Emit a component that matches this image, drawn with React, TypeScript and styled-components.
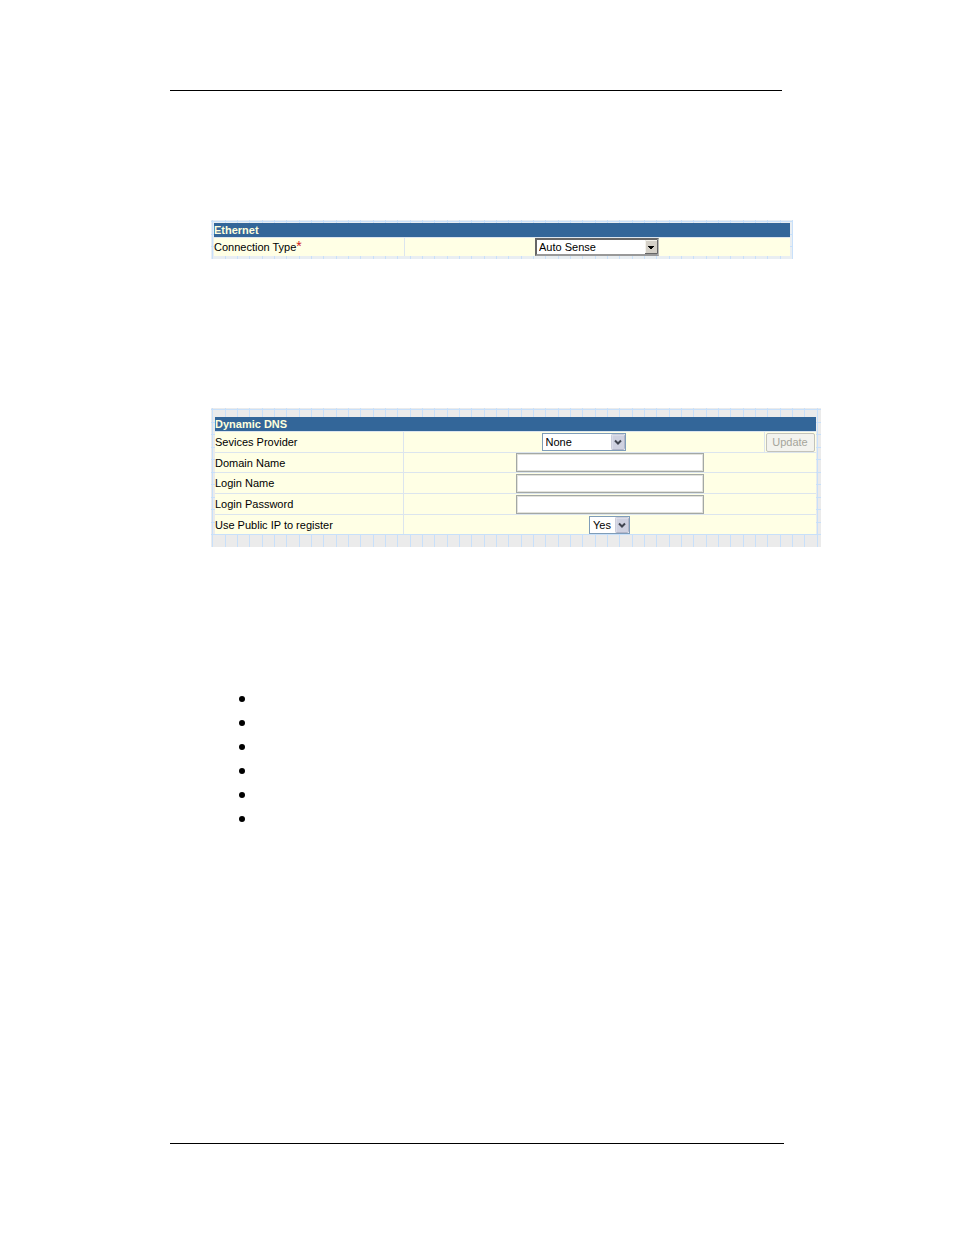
import React from "react";
import styled, { createGlobalStyle, css } from "styled-components";

const GlobalStyle = createGlobalStyle`
  *, *::before { box-sizing: border-box; }
  body {
    margin: 0;
    background: #fff;
    color: #000;
    font: 11px/14px "Liberation Sans", Arial, sans-serif;
  }
`;

const Page = styled.main`
  display: flex;
  flex-direction: column;
  padding: 90px 133px 91px 170px;
`;

const Rule = styled.hr<{ $end: number }>`
  width: auto;
  height: 1px;
  margin: 0 ${(p) => p.$end}px 0 0;
  border: 0;
  background: #000;
`;

const graph = css`
  background-color: #ebebeb;
  background-image:
    linear-gradient(#c8e0fa 1px, transparent 1px, transparent 13px, #c8e0fa 13px, #c8e0fa 14px, transparent 14px),
    linear-gradient(90deg, #c8e0fa 1px, transparent 1px, transparent 13px, #c8e0fa 13px, #c8e0fa 14px, transparent 14px, transparent 25px, #c8e0fa 25px, #c8e0fa 26px, transparent 26px);
  background-size: 100% 25px, 37px 100%;
  background-position: 0 1px, 1px 0;
`;

const EthernetPanel = styled.form`
  ${graph}
  background-color: #e9eef2;
  margin: 129px 28px 0 41px;
  padding: 3px 3px 3px 3px;
`;

const DnsPanel = styled.form`
  ${graph}
  margin: 149px 0 0 41px;
  padding: 9px 5px 13px 4px;
`;

const Grid = styled.table`
  width: 100%;
  table-layout: fixed;
  border-collapse: separate;
  border-spacing: 0;
`;

const Title = styled.th`
  height: 14px;
  padding: 0;
  background: #336699;
  color: #ffffdd;
  font-size: 11px;
  line-height: 14px;
  text-align: left;
`;

const Row = styled.tr<{ $height: number }>`
  height: ${(p) => p.$height}px;
`;

const Cell = styled.td<{ $divided?: boolean }>`
  padding: 0 1px 0 0;
  border-top: 1px solid #dce5ee;
  border-left: ${(p) => (p.$divided ? "1px solid #dce5ee" : "0")};
  background: #ffffe5;
  text-align: center;
  vertical-align: middle;
  white-space: nowrap;
`;

const LabelCell = styled(Cell)`
  text-align: left;
`;

const Label = styled.label`
  display: block;
`;

const Required = styled.span`
  color: #d02020;
  font-size: 14px;
  line-height: 12px;
  vertical-align: top;
`;

const Picker = styled.span<{ $width: number }>`
  position: relative;
  display: block;
  width: ${(p) => p.$width}px;
  height: 18px;
  margin: 0 auto;
`;

const Select = styled.select<{ $classic?: boolean }>`
  appearance: none;
  display: block;
  width: 100%;
  height: 18px;
  padding: 0 0 0 3px;
  border: 1px solid #7f9db9;
  border-radius: 0;
  background: #fff;
  color: #000;
  font: 11px/16px "Liberation Sans", Arial, sans-serif;
  ${(p) =>
    p.$classic &&
    css`
      padding-left: 2px;
      border: 2px solid;
      border-color: #666 #bbb #999 #666;
      line-height: 14px;
    `}
`;

const Arrow = styled.svg`
  position: absolute;
  top: 1px;
  right: 1px;
  pointer-events: none;
`;

const Field = styled.input`
  display: block;
  width: 188px;
  height: 19px;
  margin: 0 auto;
  padding: 0 3px;
  border: 1px solid #a3a8a6;
  border-radius: 0;
  background: #fff;
  box-shadow: inset 0 0 0 1px #e3e3dc;
  font: 11px/14px "Liberation Sans", Arial, sans-serif;
`;

const UpdateButton = styled.button`
  display: block;
  width: 49px;
  height: 19px;
  margin: 0 auto;
  padding: 0;
  border: 1px solid #c3c3bb;
  border-radius: 2px;
  background: #f3f3ee;
  color: #a5a59b;
  font: 11px/14px "Liberation Sans", Arial, sans-serif;
`;

const Bullets = styled.ul`
  display: flex;
  flex-direction: column;
  margin: 140px 0 312px 69px;
  padding: 0;
  list-style: none;
`;

const Bullet = styled.li`
  display: flex;
  align-items: center;
  height: 24px;

  &::before {
    content: "";
    width: 6px;
    height: 6px;
    border-radius: 50%;
    background: #000;
  }
`;

function ClassicArrow() {
  return (
    <Arrow width="14" height="16" viewBox="0 0 14 16" aria-hidden="true">
      <path d="M1 1h12v14H1z" fill="#d4d0c8" />
      <path d="M1.5 15V1.5H13" fill="none" stroke="#f4f2ec" />
      <path d="M1 14.5h12.500V1" fill="none" stroke="#666" />
      <path d="M4 7h6v1H9v1H8v1H6V9H5V8H4z" fill="#000" />
    </Arrow>
  );
}

function XpArrow() {
  return (
    <Arrow width="14" height="16" viewBox="0 0 14 16" aria-hidden="true">
      <rect x="0.500" y="0.500" width="13" height="15" rx="1" fill="#cfd1e0" stroke="#b3b5c8" />
      <path d="M1 15V1h12" fill="none" stroke="#e6e7ef" />
      <path d="M4 6.500l3 3 3-3" fill="none" stroke="#414550" strokeWidth="2" />
    </Arrow>
  );
}

const textFields = [
  { id: "domain", label: "Domain Name", type: "text", height: 20 },
  { id: "login", label: "Login Name", type: "text", height: 21 },
  { id: "password", label: "Login Password", type: "password", height: 21 },
];

export default function App() {
  return (
    <>
      <GlobalStyle />
      <Page>
        <Rule $end={39} />
        <EthernetPanel>
          <Grid>
            <colgroup>
              <col width="190" />
              <col />
            </colgroup>
            <thead>
              <tr>
                <Title colSpan={2}>Ethernet</Title>
              </tr>
            </thead>
            <tbody>
              <Row $height={19}>
                <LabelCell>
                  <Label htmlFor="connection">
                    Connection Type<Required>*</Required>
                  </Label>
                </LabelCell>
                <Cell $divided>
                  <Picker $width={124}>
                    <Select id="connection" $classic>
                      <option>Auto Sense</option>
                    </Select>
                    <ClassicArrow />
                  </Picker>
                </Cell>
              </Row>
            </tbody>
          </Grid>
        </EthernetPanel>
        <DnsPanel>
          <Grid>
            <colgroup>
              <col width="188" />
              <col />
              <col width="52" />
            </colgroup>
            <thead>
              <tr>
                <Title colSpan={3}>Dynamic DNS</Title>
              </tr>
            </thead>
            <tbody>
              <Row $height={21}>
                <LabelCell>
                  <Label htmlFor="provider">Sevices Provider</Label>
                </LabelCell>
                <Cell $divided>
                  <Picker $width={84}>
                    <Select id="provider">
                      <option>None</option>
                    </Select>
                    <XpArrow />
                  </Picker>
                </Cell>
                <Cell $divided>
                  <UpdateButton type="button" disabled>
                    Update
                  </UpdateButton>
                </Cell>
              </Row>
              {textFields.map((f) => (
                <Row key={f.id} $height={f.height}>
                  <LabelCell>
                    <Label htmlFor={f.id}>{f.label}</Label>
                  </LabelCell>
                  <Cell $divided colSpan={2}>
                    <Field id={f.id} type={f.type} />
                  </Cell>
                </Row>
              ))}
              <Row $height={20}>
                <LabelCell>
                  <Label htmlFor="public-ip">Use Public IP to register</Label>
                </LabelCell>
                <Cell $divided colSpan={2}>
                  <Picker $width={41}>
                    <Select id="public-ip">
                      <option>Yes</option>
                    </Select>
                    <XpArrow />
                  </Picker>
                </Cell>
              </Row>
            </tbody>
          </Grid>
        </DnsPanel>
        <Bullets>
          {Array.from({ length: 6 }, (_, i) => (
            <Bullet key={i} />
          ))}
        </Bullets>
        <Rule $end={37} />
      </Page>
    </>
  );
}
